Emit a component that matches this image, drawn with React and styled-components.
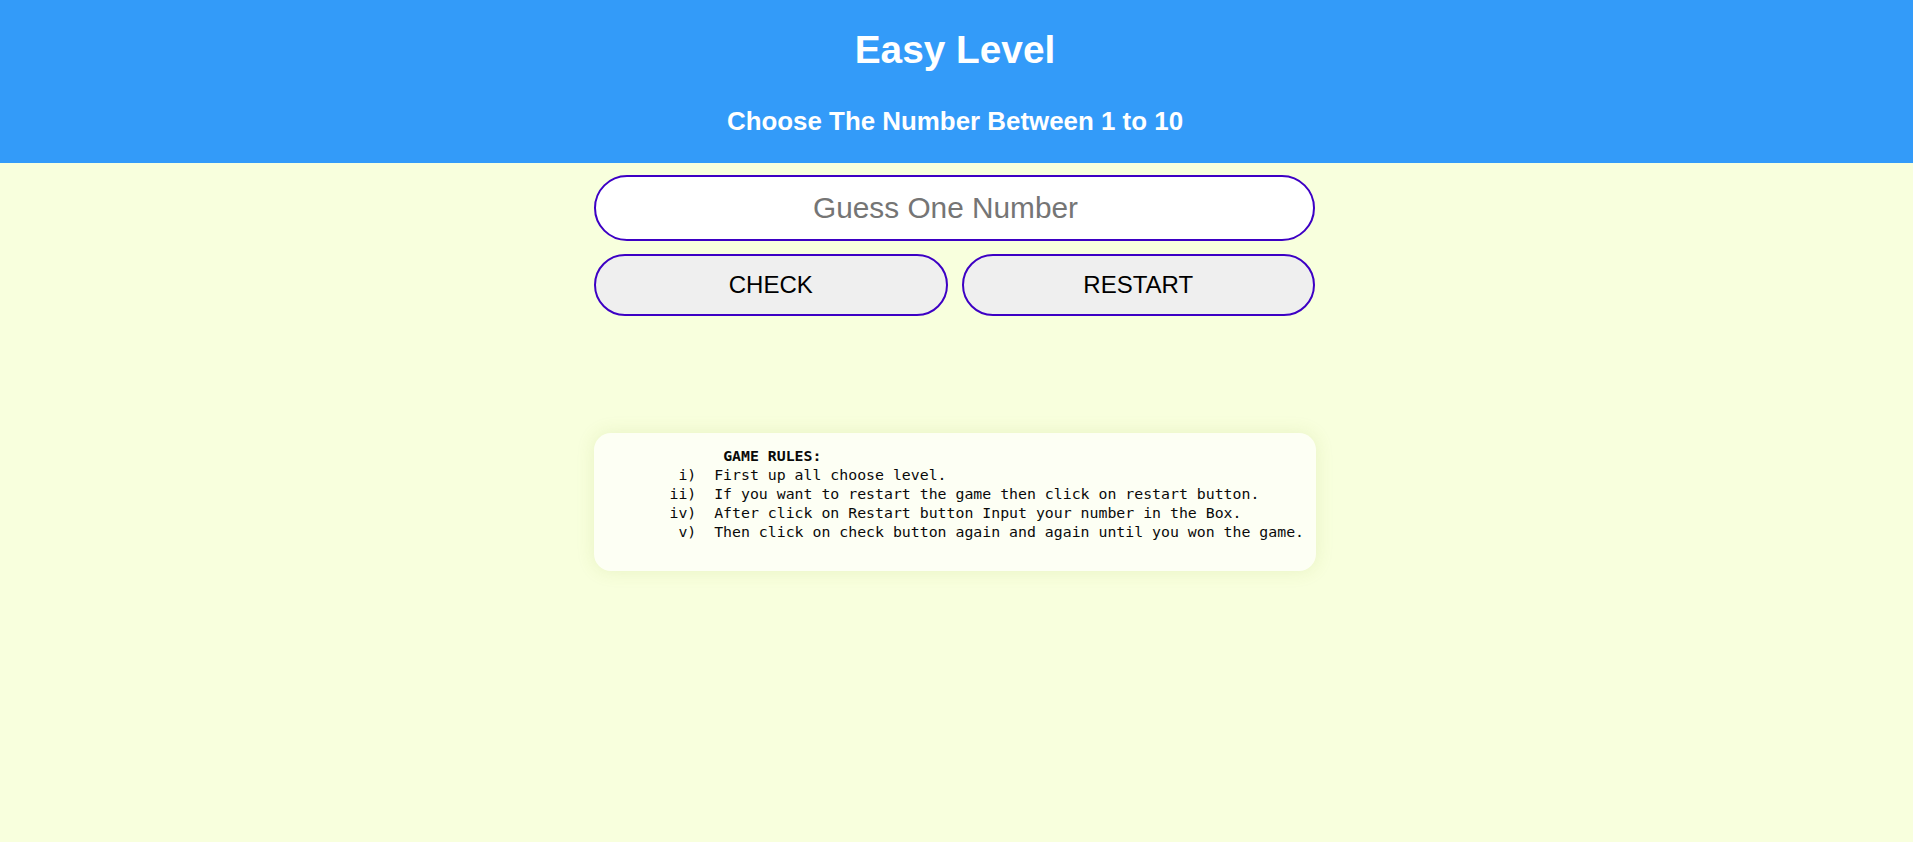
import React, { useState } from "react";
import styled, { createGlobalStyle } from "styled-components";

const GlobalStyle = createGlobalStyle`
  html, body {
    margin: 0;
    padding: 0;
    background: #f8ffdd;
    font-family: "Liberation Sans", Arial, sans-serif;
  }
  * {
    box-sizing: border-box;
  }
`;

const Page = styled.div`
  min-height: 100vh;
  background: #f8ffdd;
  display: flex;
  flex-direction: column;
  align-items: center;
`;

const Header = styled.header`
  width: 100%;
  background: #339bf9;
  color: #ffffff;
  text-align: center;
  padding: 28px 3px 27px 0;
`;

const Title = styled.h1`
  margin: 0 0 34px;
  font-size: 38.8px;
  line-height: 44px;
  font-weight: bold;
`;

const SubTitle = styled.h2`
  margin: 0;
  font-size: 25.9px;
  line-height: 30px;
  font-weight: bold;
`;

const Game = styled.main`
  width: 721px;
  margin: 12px 4px 0 0;
  display: flex;
  flex-direction: column;
  gap: 13px;
`;

const GuessInput = styled.input`
  width: 100%;
  height: 66px;
  padding: 0 18px 0 0;
  border: 2px solid #3d00c4;
  border-radius: 33px;
  background: #ffffff;
  font-family: "Liberation Sans", Arial, sans-serif;
  font-size: 29.8px;
  text-align: center;
  color: #000;
  outline: none;
  &::placeholder {
    color: #757575;
  }
`;

const ButtonRow = styled.div`
  display: grid;
  grid-template-columns: 1fr 1fr;
  gap: 14px;
`;

const Button = styled.button`
  height: 62px;
  border: 2px solid #3d00c4;
  border-radius: 31px;
  background: #efefef;
  color: #000;
  font-family: "Liberation Sans", Arial, sans-serif;
  font-size: 24px;
  text-transform: uppercase;
  cursor: pointer;
`;

const RulesCard = styled.section`
  width: 722px;
  margin: 117px 4px 0 0;
  background: #fdfff4;
  border-radius: 17px;
  box-shadow: 0 0 18px rgba(150, 175, 60, 0.16);
  padding: 14px 12px 29px 76px;
`;

const Rules = styled.pre`
  margin: 0;
  font-family: "DejaVu Sans Mono", "Liberation Mono", monospace;
  font-size: 14.85px;
  line-height: 19px;
  color: #0a0a0a;
`;

const RulesHeading = styled.b`
  font-weight: bold;
`;

const rules = [
  " i)  First up all choose level.",
  "ii)  If you want to restart the game then click on restart button.",
  "iv)  After click on Restart button Input your number in the Box.",
  " v)  Then click on check button again and again until you won the game.",
];

export default function App() {
  const [guess, setGuess] = useState("");

  return (
    <Page>
      <GlobalStyle />
      <Header>
        <Title>Easy Level</Title>
        <SubTitle>Choose The Number Between 1 to 10</SubTitle>
      </Header>
      <Game>
        <GuessInput
          type="text"
          placeholder="Guess One Number"
          value={guess}
          onChange={(e) => setGuess(e.target.value)}
        />
        <ButtonRow>
          <Button>Check</Button>
          <Button onClick={() => setGuess("")}>Restart</Button>
        </ButtonRow>
      </Game>
      <RulesCard>
        <Rules>
          {"      "}
          <RulesHeading>GAME RULES:</RulesHeading>
          {"\n" + rules.join("\n")}
        </Rules>
      </RulesCard>
    </Page>
  );
}
